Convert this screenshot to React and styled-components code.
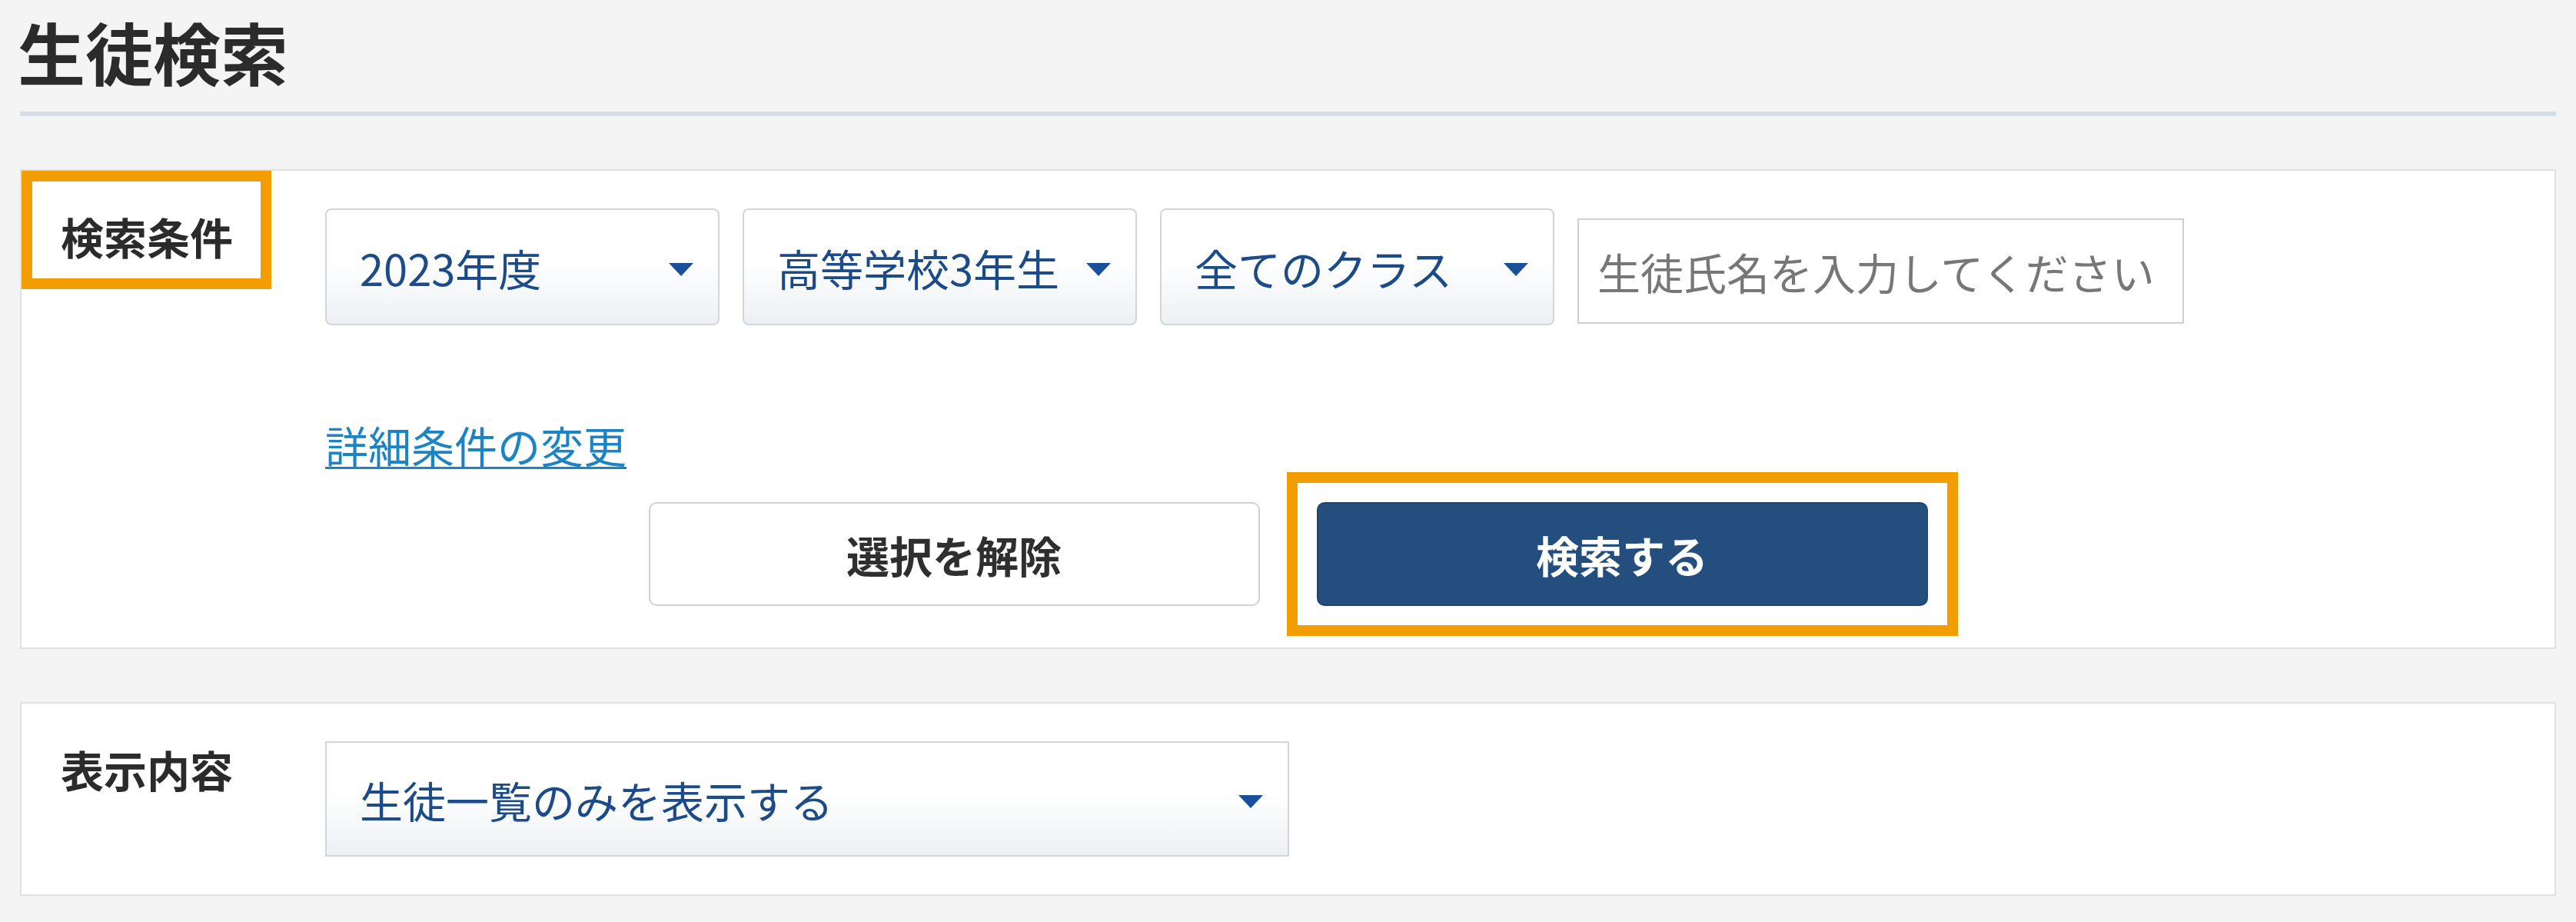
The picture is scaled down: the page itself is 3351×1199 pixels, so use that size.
import React from "react";
import styled, { createGlobalStyle } from "styled-components";

const GlobalStyle = createGlobalStyle`
  html, body {
    margin: 0;
    padding: 0;
  }
  body {
    background: #f4f4f4;
    font-family: "Noto Sans CJK JP", "Noto Sans", sans-serif;
    color: #2f2f2f;
  }
`;

const Page = styled.div`
  width: 3351px;
  box-sizing: border-box;
  padding: 22px 26px 32px;
`;

const Title = styled.h1`
  margin: 0 0 0 -3px;
  font-size: 88px;
  line-height: 1;
  font-weight: 700;
  color: #2b2b2b;
`;

const Divider = styled.div`
  height: 6px;
  margin-top: 35px;
  background: #d6dee5;
`;

const Panel = styled.section`
  display: grid;
  grid-template-columns: 395px 1fr;
  margin-top: ${(p) => p.$top}px;
  background: #fff;
  border: 2px solid #dfe1e4;
`;

const Label = styled.div`
  width: 325px;
  height: 154px;
  box-sizing: border-box;
  padding: 57px 0 0 51px;
  font-size: 56px;
  line-height: 1;
  font-weight: 700;
  color: #2b2b2b;
  box-shadow: ${(p) => (p.$marked ? "inset 0 0 0 14px #f29e02" : "none")};
`;

const Body = styled.div`
  padding: 49px 0 ${(p) => p.$bottom || 0}px;
`;

const FieldRow = styled.div`
  display: flex;
  gap: 30px;
`;

const Select = styled.div`
  width: ${(p) => p.$width}px;
  height: ${(p) => p.$height}px;
  box-sizing: border-box;
  display: flex;
  align-items: center;
  justify-content: space-between;
  padding: 0 32px 0 43px;
  border: 2px solid #d3d6d9;
  border-radius: ${(p) => p.$radius}px;
  background: linear-gradient(#ffffff 45%, #edf0f3);
  font-size: 56px;
  color: #1c4b89;
  white-space: nowrap;
`;

const Arrow = styled.span`
  width: 0;
  height: 0;
  margin-top: 6px;
  border-left: 16px solid transparent;
  border-right: 16px solid transparent;
  border-top: 17px solid #1a4f9a;
`;

const NameInput = styled.input`
  align-self: flex-end;
  margin-bottom: 2px;
  width: 789px;
  height: 137px;
  box-sizing: border-box;
  padding: 0 24px;
  border: 2px solid #cfcfcf;
  background: #fff;
  font-family: inherit;
  font-size: 56px;
  color: #333;
  outline: none;
  &::placeholder {
    color: #777;
  }
`;

const DetailLink = styled.a`
  display: inline-block;
  margin-top: 127px;
  font-size: 56px;
  line-height: 1;
  color: #1a84c6;
  text-decoration: underline;
  text-decoration-thickness: 3px;
  text-underline-offset: 5px;
  cursor: pointer;
`;

const ButtonRow = styled.div`
  grid-column: 1 / -1;
  display: flex;
  justify-content: center;
  gap: 74px;
  padding: 46px 0 54px;
`;

const Button = styled.button`
  width: 795px;
  height: 135px;
  box-sizing: border-box;
  border-radius: 10px;
  font-family: inherit;
  font-size: 56px;
  font-weight: 700;
  cursor: pointer;
  border: 2px solid ${(p) => (p.$primary ? "#1d4370" : "#d2d2d2")};
  background: ${(p) => (p.$primary ? "#234e7e" : "#fff")};
  color: ${(p) => (p.$primary ? "#fff" : "#2f2f2f")};
`;

const Marked = styled.span`
  display: inline-flex;
  outline: 14px solid #f29e02;
  outline-offset: 25px;
`;

const selects = [
  { label: "2023年度" },
  { label: "高等学校3年生" },
  { label: "全てのクラス" },
];

export default function App() {
  return (
    <Page>
      <GlobalStyle />
      <Title>生徒検索</Title>
      <Divider />

      <Panel $top={69}>
        <Label $marked>検索条件</Label>
        <Body>
          <FieldRow>
            {selects.map((s) => (
              <Select key={s.label} $width={513} $height={152} $radius={8}>
                <span>{s.label}</span>
                <Arrow />
              </Select>
            ))}
            <NameInput type="text" placeholder="生徒氏名を入力してください" />
          </FieldRow>
          <DetailLink>詳細条件の変更</DetailLink>
        </Body>
        <ButtonRow>
          <Button>選択を解除</Button>
          <Marked>
            <Button $primary>検索する</Button>
          </Marked>
        </ButtonRow>
      </Panel>

      <Panel $top={69}>
        <Label>表示内容</Label>
        <Body $bottom={49}>
          <Select $width={1254} $height={150} $radius={0}>
            <span>生徒一覧のみを表示する</span>
            <Arrow />
          </Select>
        </Body>
      </Panel>
    </Page>
  );
}
